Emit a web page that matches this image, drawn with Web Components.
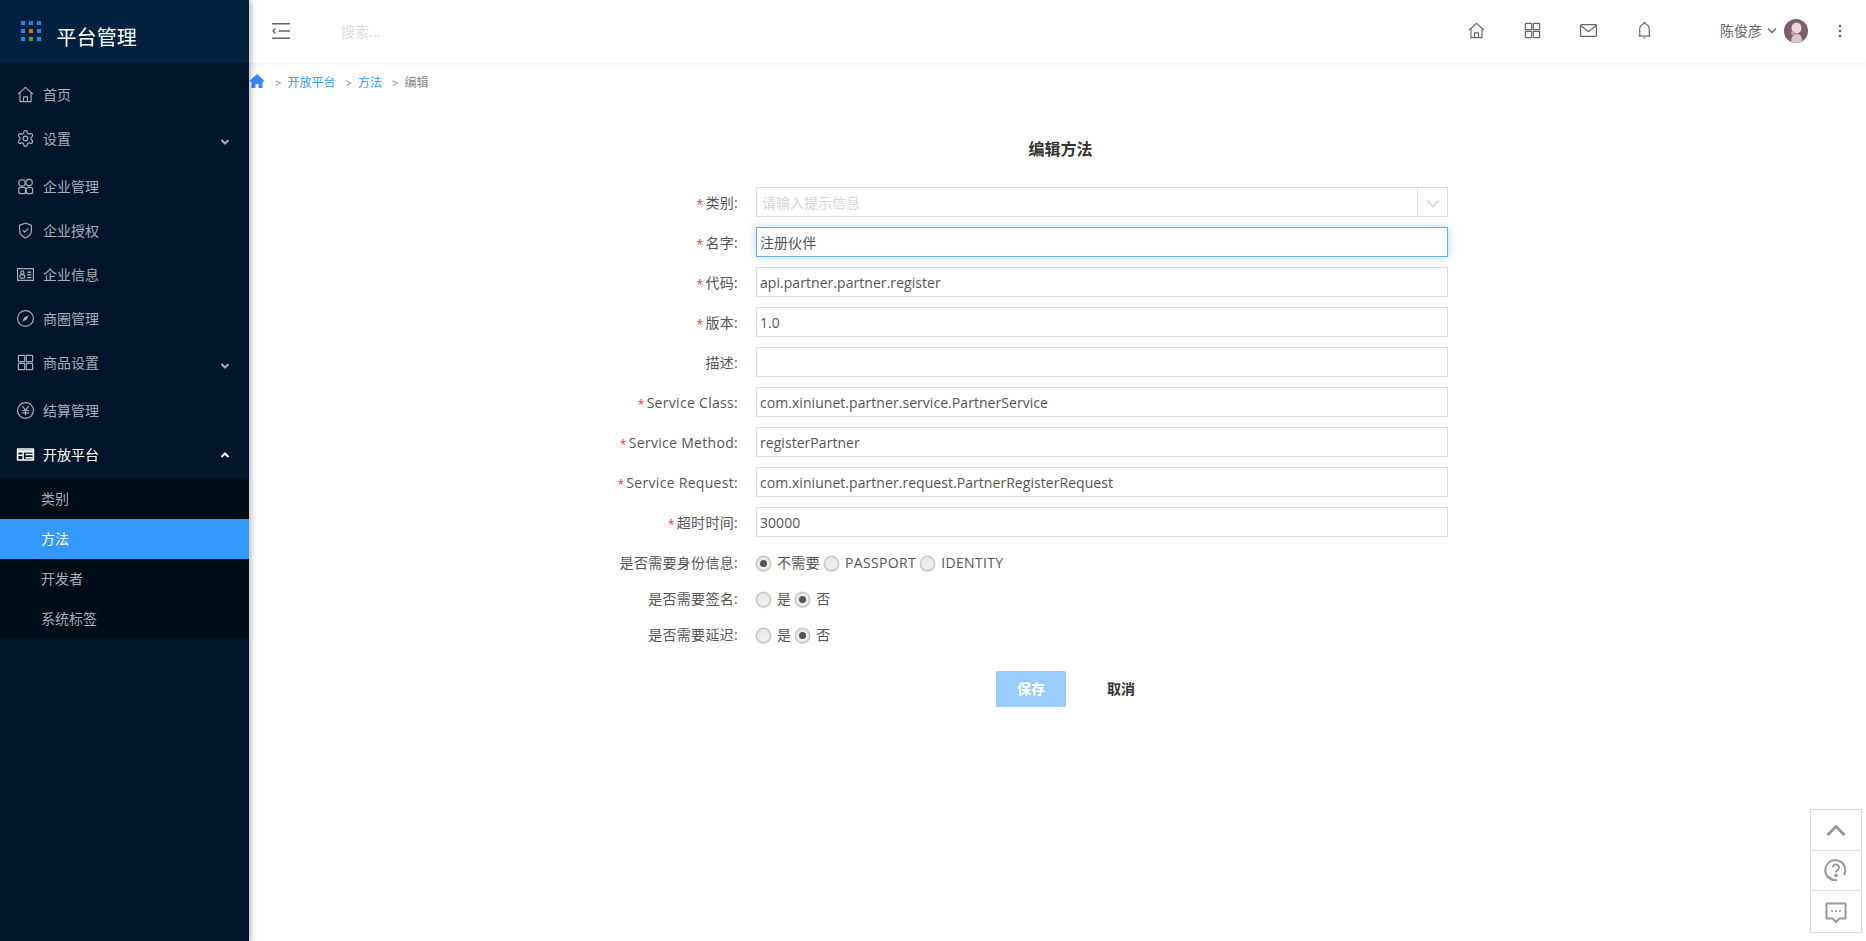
<!DOCTYPE html>
<html lang="zh-CN"><head><meta charset="utf-8"><title>编辑方法</title>
<style>
html,body{margin:0;padding:0;height:100%;background:#fff;overflow:hidden}
body{font:14px/20px "Open Sans","Noto Sans CJK SC",sans-serif;color:#555}
</style></head><body>
<x-app>
  <x-sidebar slot="side">
    <x-nav-item icon="home">首页</x-nav-item>
    <x-nav-item icon="gear" caret="down">设置</x-nav-item>
    <x-nav-item icon="company">企业管理</x-nav-item>
    <x-nav-item icon="shield">企业授权</x-nav-item>
    <x-nav-item icon="idcard">企业信息</x-nav-item>
    <x-nav-item icon="compass">商圈管理</x-nav-item>
    <x-nav-item icon="grid" caret="down">商品设置</x-nav-item>
    <x-nav-item icon="yen">结算管理</x-nav-item>
    <x-nav-item icon="table" caret="up" open>开放平台</x-nav-item>
    <x-sub-menu>
      <x-sub-item>类别</x-sub-item>
      <x-sub-item active>方法</x-sub-item>
      <x-sub-item>开发者</x-sub-item>
      <x-sub-item>系统标签</x-sub-item>
    </x-sub-menu>
  </x-sidebar>
  <x-topbar slot="top"></x-topbar>
  <x-breadcrumb slot="main"></x-breadcrumb>
  <x-form-page slot="main" heading="编辑方法">
    <x-field label="类别" required><x-select placeholder="请输入提示信息"></x-select></x-field>
    <x-field label="名字" required><x-input value="注册伙伴" focused></x-input></x-field>
    <x-field label="代码" required><x-input value="api.partner.partner.register"></x-input></x-field>
    <x-field label="版本" required><x-input value="1.0"></x-input></x-field>
    <x-field label="描述"><x-input value=""></x-input></x-field>
    <x-field label="Service Class" required><x-input value="com.xiniunet.partner.service.PartnerService"></x-input></x-field>
    <x-field label="Service Method" required><x-input value="registerPartner"></x-input></x-field>
    <x-field label="Service Request" required><x-input value="com.xiniunet.partner.request.PartnerRegisterRequest"></x-input></x-field>
    <x-field label="超时时间" required><x-input value="30000"></x-input></x-field>
    <x-field label="是否需要身份信息" kind="first-radio"><x-radio checked>不需要</x-radio><x-radio>PASSPORT</x-radio><x-radio>IDENTITY</x-radio></x-field>
    <x-field label="是否需要签名" kind="radio"><x-radio>是</x-radio><x-radio checked>否</x-radio></x-field>
    <x-field label="是否需要延迟" kind="radio"><x-radio>是</x-radio><x-radio checked>否</x-radio></x-field>
    <x-actions></x-actions>
  </x-form-page>
  <x-float-tools slot="float"></x-float-tools>
</x-app>
<script>
const ICONS={
 home:'<path d="M2.5 11.5 12 3l9.5 8.5"/><path d="M5 9.5V21h14V9.5"/><path d="M9.5 21v-6h5v6"/>',
 gear:'<path d="M12.22 2h-.44a2 2 0 0 0-2 2v.18a2 2 0 0 1-1 1.73l-.43.25a2 2 0 0 1-2 0l-.15-.08a2 2 0 0 0-2.73.73l-.22.38a2 2 0 0 0 .73 2.73l.15.1a2 2 0 0 1 1 1.72v.51a2 2 0 0 1-1 1.74l-.15.09a2 2 0 0 0-.73 2.73l.22.38a2 2 0 0 0 2.73.73l.15-.08a2 2 0 0 1 2 0l.43.25a2 2 0 0 1 1 1.73V20a2 2 0 0 0 2 2h.44a2 2 0 0 0 2-2v-.18a2 2 0 0 1 1-1.73l.43-.25a2 2 0 0 1 2 0l.15.08a2 2 0 0 0 2.73-.73l.22-.39a2 2 0 0 0-.73-2.73l-.15-.08a2 2 0 0 1-1-1.74v-.5a2 2 0 0 1 1-1.74l.15-.09a2 2 0 0 0 .73-2.73l-.22-.38a2 2 0 0 0-2.73-.73l-.15.08a2 2 0 0 1-2 0l-.43-.25a2 2 0 0 1-1-1.73V4a2 2 0 0 0-2-2z"/><circle cx="12" cy="12" r="3"/>',
 company:'<circle cx="7.500" cy="7.500" r="4"/><circle cx="16.500" cy="7" r="4"/><rect x="3.500" y="13" width="8.500" height="8" rx="2.500"/><rect x="13" y="13" width="8" height="8" rx="2.500"/>',
 shield:'<path d="M12 2.500 4.500 5.500v6.500c0 4.500 3 7.500 7.500 9.500 4.500-2 7.500-5 7.500-9.500V5.500z"/><path d="m8.500 11.500 2.500 2.500 4.500-4.500"/>',
 idcard:'<rect x="2" y="4.500" width="20" height="15"/><circle cx="8" cy="9.500" r="2"/><rect x="5" y="12.500" width="6" height="4" rx="1"/><path d="M14 9h5.500M14 12.500h5.500M14 16h5.500"/>',
 compass:'<circle cx="12" cy="12" r="10"/><path d="m16 8-2.500 5.500L8 16l2.500-5.500z" fill="currentColor" stroke="none"/>',
 grid:'<rect x="3" y="3" width="8" height="8" rx=".8"/><rect x="13" y="3" width="8" height="8" rx=".8"/><rect x="3" y="13" width="8" height="8" rx=".8"/><rect x="13" y="13" width="8" height="8" rx=".8"/>',
 yen:'<circle cx="12" cy="12" r="10"/><path d="m8 6.500 4 5 4-5M12 11.500V18M8 12h8M8 15h8"/>',
 table:'<rect x="2" y="5" width="20" height="14" stroke-width="2"/><path d="M1.500 8h21" stroke-width="3"/><path d="M9 8v11M12 12h10M12 16h10M2 13h7" stroke-width="1.800"/>',
 mail:'<rect x="2" y="4.500" width="20" height="15" rx="1"/><path d="m2.500 6 9.500 7.500L21.500 6"/>',
 bell:'<path d="M6 19V10a6 6.500 0 0 1 12 0v9"/><path d="M4.500 19h15"/><path d="M10.500 3.500a1.500 1.500 0 0 1 3 0M10.500 21.500h3"/>',
 help:'<path d="M20 17A10 10 0 1 0 13 22"/><path d="M4.500 18.500A10 10 0 0 0 9 21.500"/><path d="M9 9.500a3 3 0 1 1 4.600 2.500c-1 .7-1.600 1.300-1.600 2.500" /><circle cx="12" cy="17.500" r=".8" fill="currentColor"/>',
 chat:'<path d="M2.500 3.500h19v15h-6l-3.500 3.500-3.500-3.500h-6z"/><path d="M8 11h.01M12 11h.01M16 11h.01" stroke-linecap="round" stroke-width="2.200"/>'
};
function el(name,css,html){
  const C=class extends HTMLElement{
    constructor(){super();this.attachShadow({mode:'open'})}
    connectedCallback(){const a=n=>this.getAttribute(n);this.shadowRoot.innerHTML='<style>'+css+'</style>'+(typeof html==='function'?html(a,this):html);}
  };
  customElements.define(name,C);
}
el('x-icon',':host{display:inline-flex;width:var(--s,16px);height:var(--s,16px);flex:none}svg{width:100%;height:100%;display:block}',
 a=>`<svg viewBox="0 0 24 24" fill="none" stroke="currentColor" stroke-width="${a('sw')||1.5}" stroke-linejoin="round">${ICONS[a('name')]}</svg>`);
el('x-app',`:host{display:grid;grid-template-columns:249px 1fr;height:100vh;position:relative;overflow:hidden}
 .side{display:block;position:relative;z-index:2;box-shadow:2px 0 6px rgba(0,0,0,.28)} .right{min-width:0;display:flex;flex-direction:column}`,
 `<div class="side"><slot name="side"></slot></div><div class="right"><slot name="top"></slot><slot name="main"></slot></div><slot name="float"></slot>`);
el('x-sidebar',`:host{display:block;height:100%;background:#00152b;color:#a6adb4}
 .logo{height:63px;background:#002140;display:flex;color:#fff;position:relative;box-sizing:border-box;padding:21px 0 0 21px}
 .dots{display:grid;grid-template-columns:repeat(3,4px);grid-auto-rows:4px;gap:4px;height:20px}
 .dots i{background:#0a8cf5;display:block}
 .t{font-size:20px;line-height:26px;margin:4px 0 0 15.500px;letter-spacing:.1px}
 nav{padding-top:10px;display:block}`,
 `<div class="logo"><div class="dots"><i></i><i></i><i></i><i></i><i style="background:#f5670f"></i><i></i><i></i><i style="background:#3aa83a"></i><i></i></div><div class="t">平台管理</div></div><nav><slot></slot></nav>`);
el('x-nav-item',`:host{display:flex;align-items:flex-start;height:44px;padding:12px 0 0 15.500px;box-sizing:border-box;color:#a6adb4;position:relative;--s:19px}
 :host([caret=down]){height:48px}
 :host([open]){color:#fff;height:46px}
 .l{margin-left:8.500px;line-height:20px}
 svg.c{position:absolute;left:220px;top:21px;width:10px;height:8px}
 :host([open]) svg.c{top:18px}`,
 a=>`<x-icon name="${a('icon')}"></x-icon><span class="l"><slot></slot></span>`+
 (a('caret')?`<svg class="c" viewBox="0 0 10 8" fill="none" stroke="currentColor" stroke-width="2"><path d="${a('caret')=='down'?'M1.500 2 5 5.500 8.500 2':'M1.500 6 5 2.500 8.500 6'}"/></svg>`:''));
el('x-sub-menu',':host{display:block;background:#000c17}','<slot></slot>');
el('x-sub-item',`:host{display:block;height:40px;line-height:40px;padding-left:41px;color:#a6adb4}
 :host([active]){background:#39f;color:#fff}`,'<slot></slot>');
el('x-topbar',`:host{display:flex;align-items:center;height:63px;background:#fff;box-shadow:0 1px 5px rgba(0,0,0,.07);position:relative;z-index:1;color:#666;flex:none}
 .burger{margin-left:23px;width:18px;height:16px;margin-top:-2px;flex:none}
 .search{margin-left:51px;color:#ddd;flex:1}
 .ic{display:flex;gap:37px;--s:19px;margin-right:66px;margin-top:-3px}
 .user{display:flex;align-items:center;color:#666;margin-right:30px;margin-top:-2px}
 svg.car{width:10px;height:7px;margin-left:5px;margin-right:7px}
 svg.av{width:24px;height:24px;display:block;border-radius:50%}
 svg.more{width:4px;height:14px;margin-right:24px;margin-top:-2px}`,
 `<svg class="burger" viewBox="0 0 18 16" fill="none" stroke="#666"><path d="M0 .75h18M6.500 8h11.500M0 15.250h18" stroke-width="1.500"/><path d="M3.500 5.500 1 8l2.500 2.500" stroke-width="1.300"/></svg>
 <div class="search">搜索...</div>
 <div class="ic"><x-icon name="home"></x-icon><x-icon name="grid"></x-icon><x-icon name="mail"></x-icon><x-icon name="bell"></x-icon></div>
 <div class="user">陈俊彦<svg class="car" viewBox="0 0 10 7" fill="none" stroke="#666" stroke-width="1.300"><path d="M1 1.500 5 5.500 9 1.500"/></svg><svg class="av" viewBox="0 0 24 24"><rect width="24" height="24" fill="#7c5c6e"/><ellipse cx="12.500" cy="9" rx="5" ry="5.500" fill="#e8d6da"/><path d="M7 24c0-6 2-9 6-9s5 3 5 9z" fill="#d9c0ca"/><circle cx="9" cy="14" r="2" fill="#c9a6b0"/></svg></div>
 <svg class="more" viewBox="0 0 4 14" fill="#666"><circle cx="2" cy="2" r="1.300"/><circle cx="2" cy="7" r="1.300"/><circle cx="2" cy="12" r="1.300"/></svg>`);
el('x-breadcrumb',`:host{display:flex;align-items:center;height:20px;margin-top:10px;font-size:12px;color:#888;flex:none}
 svg{width:16px;height:16px;margin-top:-5px;display:block}
 a{color:#39f;text-decoration:none} .s{margin:0 6.500px 0 10px;width:6px;font-size:11px;color:#888}`,
 `<svg viewBox="0 0 16 16" fill="#3388ff"><path d="M8 1 0 8.500h2.500V15h4v-4h3v4h4V8.500H16z"/></svg><span class="s">&gt;</span><a>开放平台</a><span class="s">&gt;</span><a>方法</a><span class="s">&gt;</span><span>编辑</span>`);
el('x-form-page',`:host{display:block}
 h2{margin:45px 0 27px;padding-left:6px;text-align:center;font-size:16px;line-height:22px;font-weight:700;color:#333}`,
 a=>`<h2>${a('heading')}</h2><slot></slot>`);
el('x-field',`:host{display:grid;grid-template-columns:489px 692px;column-gap:18px;height:40px;align-items:start}
 :host([kind=first-radio]){height:36px;margin-top:1px}
 :host([kind=radio]){height:36px}
 .lb{text-align:right;line-height:30px;padding-top:1px;color:#555;white-space:nowrap;letter-spacing:.3px}
 :host([kind]) .lb{padding-top:0}
 .st{color:#f33;margin-right:2px;font-size:12px;position:relative;top:1px}
 .c{display:flex;align-items:center;min-height:30px}`,
 a=>`<div class="lb">${a('required')!==null?'<span class="st">*</span>':''}${a('label')}:</div><div class="c"><slot></slot></div>`);
el('x-input',`:host{display:block;width:100%}
 .b{box-sizing:border-box;height:30px;border:1px solid #ddd;padding:1px 3px 0;line-height:28px;color:#555;white-space:nowrap;overflow:hidden;letter-spacing:.05px}
 :host([focused]) .b{border-color:#66afe9;box-shadow:0 0 8px rgba(102,175,233,.5)}`,
 a=>`<div class="b">${a('value')||''}</div>`);
el('x-select',`:host{display:flex;width:100%;box-sizing:border-box;height:30px;border:1px solid #ddd}
 .p{flex:1;padding:1px 5px 0;line-height:28px;color:#d5d5d5}
 .a{width:29px;border-left:1px solid #ddd;display:flex;align-items:center;justify-content:center}
 svg{width:14px;height:9px;margin-top:3px}`,
 a=>`<div class="p">${a('placeholder')}</div><div class="a"><svg viewBox="0 0 14 9" fill="none" stroke="#ddd" stroke-width="2"><path d="M1 1.500 7 7.500 13 1.500"/></svg></div>`);
el('x-radio',`:host{display:inline-flex;align-items:center;color:#555;margin-right:4px;letter-spacing:.35px}
 .r{width:15px;height:15px;box-sizing:border-box;border-radius:50%;border:1px solid #bbb;background:linear-gradient(#e6e6e6,#f0f0f0);box-shadow:0 0 0 .5px #ccc,0 1px 1px rgba(0,0,0,.15);margin-right:6px;display:flex;align-items:center;justify-content:center;flex:none}
 i{width:7px;height:7px;border-radius:50%;background:#555;display:block}`,
 a=>`<span class="r">${a('checked')!==null?'<i></i>':''}</span><slot></slot>`);
el('x-actions',`:host{display:flex;margin:15px 0 0 747px;align-items:center}
 .s{width:70px;height:36px;background:#9cf;border-radius:2px;color:#fff;font-weight:700;display:flex;align-items:center;justify-content:center}
 .c{margin-left:41px;color:#333;font-weight:700;width:28px}`,
 `<div class="s">保存</div><div class="c">取消</div>`);
el('x-float-tools',`:host{position:absolute;right:4px;bottom:8px;width:52px;height:124px;box-sizing:border-box;border:1px solid #ddd;display:grid;grid-template-rows:1fr 1fr 1fr;background:#fff;color:#999;z-index:3}
 div{display:flex;align-items:center;justify-content:center;border-bottom:1px solid #ddd;--s:24px}
 div:last-child{border-bottom:0}
 svg{width:20px;height:12px}`,
 `<div><svg viewBox="0 0 20 12" fill="none" stroke="#999" stroke-width="3"><path d="M1.500 11 10 2.500 18.500 11"/></svg></div><div><x-icon name="help" sw="2"></x-icon></div><div><x-icon name="chat" sw="2"></x-icon></div>`);
</script>
</body></html>
